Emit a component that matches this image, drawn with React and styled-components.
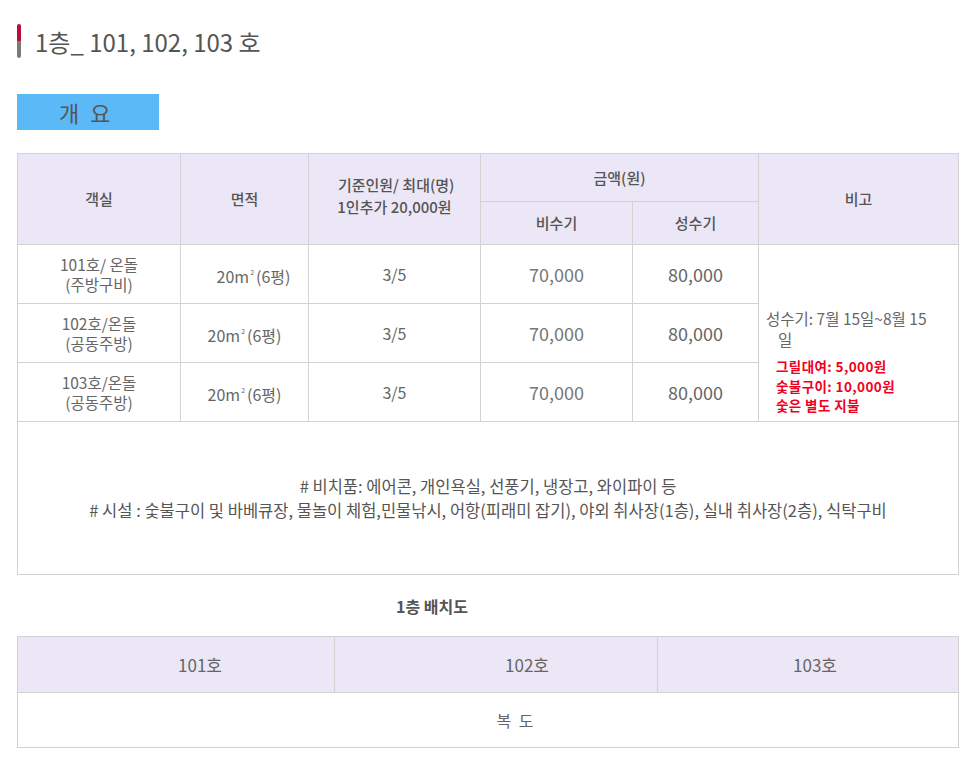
import React from "react";
import styled, { createGlobalStyle } from "styled-components";

const GlobalStyle = createGlobalStyle`
  body {
    margin: 0;
    background: #fff;
    font-family: "Noto Sans CJK KR", "Noto Sans", sans-serif;
    color: #555;
  }
`;

const Page = styled.div`
  width: 941px;
  padding: 24px 0 0 17px;
`;

const Title = styled.h2`
  display: flex;
  align-items: center;
  gap: 14px;
  margin: 0;
  height: 34px;
  font-size: 24px;
  font-weight: 400;
  color: #555;
`;

const Bar = styled.span`
  width: 4px;
  height: 34px;
  border-radius: 2px;
  background: linear-gradient(#b8103a 0 50%, #7a7a7a 50% 100%);
`;

const Tab = styled.div`
  margin-top: 36px;
  width: 142px;
  height: 36px;
  background: #5cb9f7;
  color: #555;
  font-size: 22px;
  line-height: 36px;
  padding-left: 42px;
  box-sizing: border-box;
  letter-spacing: 3px;
`;

const Table = styled.table`
  width: 941px;
  border-collapse: collapse;
  margin-top: ${p => p.$top || 0}px;
  table-layout: fixed;
`;

const Th = styled.th`
  background: #ece7f6;
  border: 1px solid #d2d2d2;
  font-size: 15px;
  font-weight: 500;
  color: #555;
  text-align: center;
  height: ${p => p.$h}px;
  padding: 0;
  line-height: 22px;
`;

const Td = styled.td`
  border: 1px solid #d2d2d2;
  font-size: ${p => p.$size || 16}px;
  color: ${p => p.$color || "#666"};
  text-align: center;
  height: ${p => p.$h}px;
  padding: 0 0 0 ${p => p.$pad || 0}px;
  line-height: 20px;
`;

const Line = styled.div`
  font-size: 15.5px;
  line-height: 20px;
  height: 20px;
`;

const Sup = styled.sup`
  font-size: 7px;
  vertical-align: 8px;
  margin: 0 2px 0 1px;
`;

const NoteCell = styled.td`
  border: 1px solid #d2d2d2;
  height: 152px;
  padding: 0;
  text-align: center;
  font-size: 16.5px;
  line-height: 24px;
  color: #555;
`;

const Remark = styled.td`
  border: 1px solid #d2d2d2;
  vertical-align: top;
  padding: 62px 0 0 7px;
  text-align: left;
`;

const Season = styled.div`
  font-size: 15.5px;
  color: #666;
  line-height: 22px;
`;

const SeasonTail = styled.div`
  padding-left: 12px;
  font-size: 15.5px;
  color: #666;
  line-height: 20px;
`;

const Red = styled.div`
  margin-top: 8px;
  padding-left: 10px;
  color: #f0001c;
  font-size: 13.5px;
  font-weight: 700;
  line-height: 19.5px;
  letter-spacing: 0.4px;
`;

const MapTitle = styled.div`
  margin-top: 20px;
  text-align: center;
  width: 830px;
  font-size: 16px;
  font-weight: 700;
  color: #555;
  height: 22px;
  line-height: 22px;
`;

const MapTh = styled.td`
  background: #ece7f6;
  border: 1px solid #d2d2d2;
  text-align: center;
  font-size: 17px;
  color: #666;
  height: 55px;
  padding: 0 0 0 ${p => p.$pad}px;
`;

const MapTd = styled.td`
  border: 1px solid #d2d2d2;
  text-align: center;
  font-size: 16px;
  color: #666;
  height: 54px;
  padding: 0 0 0 56px;
  letter-spacing: 2px;
`;

const rooms = [
  { name: "101호/ 온돌", sub: "(주방구비)", area: " 20m", pad: 18, h: 58 },
  { name: "102호/온돌", sub: "(공동주방)", area: "20m", pad: 0, h: 58 },
  { name: "103호/온돌", sub: "(공동주방)", area: "20m", pad: 0, h: 58 },
];

export default function App() {
  return (
    <Page>
      <GlobalStyle />
      <Title>
        <Bar />
        1층_ 101, 102, 103 호
      </Title>
      <Tab>개 요</Tab>

      <Table $top={23}>
        <colgroup>
          <col style={{ width: 163 }} />
          <col style={{ width: 128 }} />
          <col style={{ width: 172 }} />
          <col style={{ width: 152 }} />
          <col style={{ width: 126 }} />
          <col style={{ width: 200 }} />
        </colgroup>
        <thead>
          <tr>
            <Th rowSpan={2}>객실</Th>
            <Th rowSpan={2}>면적</Th>
            <Th rowSpan={2} style={{ verticalAlign: "top", paddingTop: 20 }}>
              &nbsp;기준인원/ 최대(명)
              <br />
              1인추가 20,000원
            </Th>
            <Th colSpan={2} $h={47}>금액(원)</Th>
            <Th rowSpan={2}>비고</Th>
          </tr>
          <tr>
            <Th $h={42}>비수기</Th>
            <Th $h={42}>성수기</Th>
          </tr>
        </thead>
        <tbody>
          {rooms.map((r, i) => (
            <tr key={r.name}>
              <Td $h={r.h}>
                <Line>{r.name}</Line>
                <Line>{r.sub}</Line>
              </Td>
              <Td $pad={r.pad}>
                {r.area}
                <Sup>2</Sup>(6평)
              </Td>
              <Td>3/5</Td>
              <Td $size={18} $color="#777">70,000</Td>
              <Td $size={18}>80,000</Td>
              {i === 0 && (
                <Remark rowSpan={3}>
                  <Season>성수기: 7월 15일~8월 15</Season>
                  <SeasonTail>일</SeasonTail>
                  <Red>
                    그릴대여: 5,000원
                    <br />
                    숯불구이: 10,000원
                    <br />
                    숯은 별도 지불
                  </Red>
                </Remark>
              )}
            </tr>
          ))}
          <tr>
            <NoteCell colSpan={6}>
              # 비치품: 에어콘, 개인욕실, 선풍기, 냉장고, 와이파이 등
              <br /># 시설 : 숯불구이 및 바베큐장, 물놀이 체험,민물낚시, 어항(피래미 잡기), 야외 취사장(1층), 실내 취사장(2층), 식탁구비
            </NoteCell>
          </tr>
        </tbody>
      </Table>

      <MapTitle>1층 배치도</MapTitle>

      <Table $top={19}>
        <colgroup>
          <col style={{ width: 317 }} />
          <col style={{ width: 323 }} />
          <col style={{ width: 301 }} />
        </colgroup>
        <tbody>
          <tr>
            <MapTh $pad={48}>101호</MapTh>
            <MapTh $pad={62}>102호</MapTh>
            <MapTh $pad={14}>103호</MapTh>
          </tr>
          <tr>
            <MapTd colSpan={3}>복 도</MapTd>
          </tr>
        </tbody>
      </Table>
    </Page>
  );
}
